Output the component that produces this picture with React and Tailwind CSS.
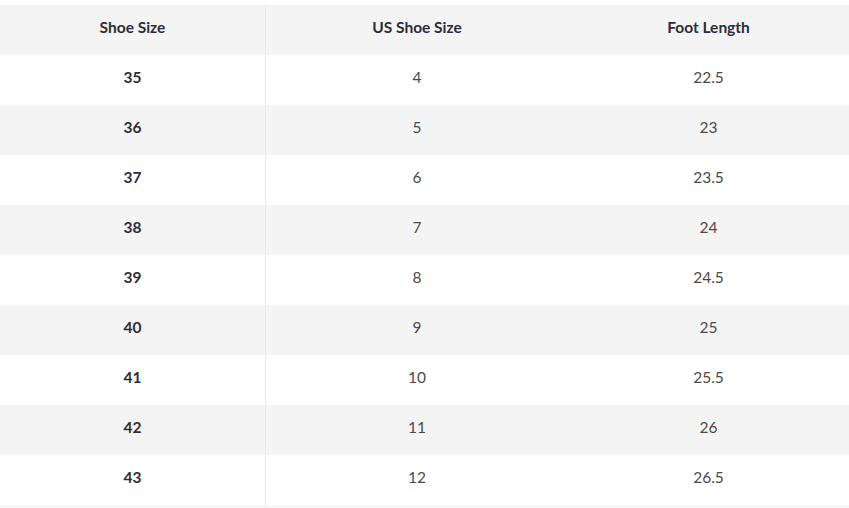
const ROWS = [
  ["35", "4", "22.5"],
  ["36", "5", "23"],
  ["37", "6", "23.5"],
  ["38", "7", "24"],
  ["39", "8", "24.5"],
  ["40", "9", "25"],
  ["41", "10", "25.5"],
  ["42", "11", "26"],
  ["43", "12", "26.5"],
];

export default function App() {
  return (
    <div className="w-[849px] h-[508px] bg-white pt-[5px] font-['Lato',sans-serif] text-[15.5px]">
      <div className="grid grid-cols-[266px_302px_1fr] bg-[#f4f4f4] h-[50px] items-center text-center font-bold text-[#2d2d38]">
        <div className="h-full flex items-center justify-center pb-[4px] border-r border-[#e8e8e8]">Shoe Size</div>
        <div className="pb-[4px]">US Shoe Size</div>
        <div className="pb-[4px]">Foot Length</div>
      </div>
      {ROWS.map((r, i) => (
        <div
          key={r[0]}
          className={`grid grid-cols-[266px_302px_1fr] h-[50px] items-center text-center ${i % 2 ? "bg-[#f4f4f4]" : "bg-white"}`}
        >
          <div className="h-full flex items-center justify-center pb-[4px] border-r border-[#e8e8e8] font-bold text-[#2d2d38]">{r[0]}</div>
          <div className="pb-[4px] text-[#4a4a4a]">{r[1]}</div>
          <div className="pb-[4px] text-[#4a4a4a]">{r[2]}</div>
        </div>
      ))}
      <div className="h-[3px] bg-[#f7f7f7]" />
    </div>
  );
}
